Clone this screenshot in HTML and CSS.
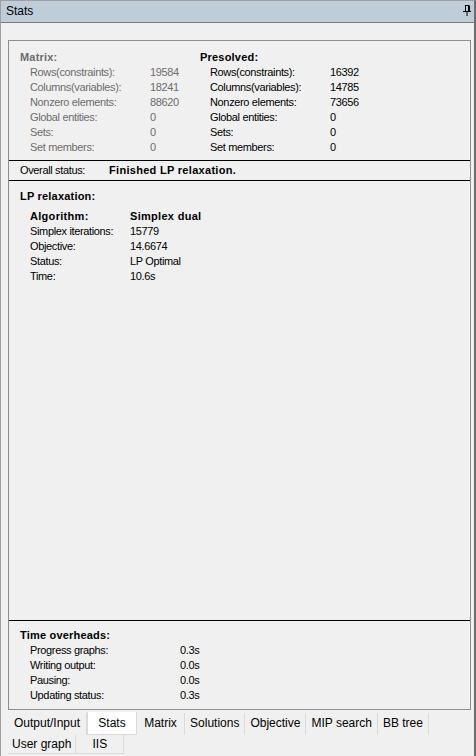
FILE: index.html
```html
<!DOCTYPE html>
<html>
<head>
<meta charset="utf-8">
<link rel="stylesheet" href="styles.css">
</head>
<body>
<div class="window">
  <div class="titlebar">
    <span class="title">Stats</span>
    <svg class="pin" width="8" height="11" viewBox="0 0 8 11">
      <path d="M2 0.5H6M2.5 0.5V6M5.5 0.5V6M6.5 0.5V6M0 6.5H8M4 6.5V11" stroke="#000" stroke-width="1" fill="none"/>
    </svg>
  </div>
  <div class="panel">
    <div class="group">
      <div class="matrix">
        <div class="col disabled">
          <div class="head">Matrix:</div>
          <div class="row"><span class="lbl">Rows(constraints):</span><span>19584</span></div>
          <div class="row"><span class="lbl">Columns(variables):</span><span>18241</span></div>
          <div class="row"><span class="lbl">Nonzero elements:</span><span>88620</span></div>
          <div class="row"><span class="lbl">Global entities:</span><span>0</span></div>
          <div class="row"><span class="lbl">Sets:</span><span>0</span></div>
          <div class="row"><span class="lbl">Set members:</span><span>0</span></div>
        </div>
        <div class="col">
          <div class="head">Presolved:</div>
          <div class="row"><span class="lbl">Rows(constraints):</span><span>16392</span></div>
          <div class="row"><span class="lbl">Columns(variables):</span><span>14785</span></div>
          <div class="row"><span class="lbl">Nonzero elements:</span><span>73656</span></div>
          <div class="row"><span class="lbl">Global entities:</span><span>0</span></div>
          <div class="row"><span class="lbl">Sets:</span><span>0</span></div>
          <div class="row"><span class="lbl">Set members:</span><span>0</span></div>
        </div>
      </div>
      <div class="status">
        <span class="status-lbl">Overall status:</span><span class="bold">Finished LP relaxation.</span>
      </div>
      <div class="lp">
        <div class="head">LP relaxation:</div>
        <div class="lp-rows">
          <div class="row bold"><span class="lbl-lp">Algorithm:</span><span>Simplex dual</span></div>
          <div class="row"><span class="lbl-lp">Simplex iterations:</span><span>15779</span></div>
          <div class="row"><span class="lbl-lp">Objective:</span><span>14.6674</span></div>
          <div class="row"><span class="lbl-lp">Status:</span><span>LP Optimal</span></div>
          <div class="row"><span class="lbl-lp">Time:</span><span>10.6s</span></div>
        </div>
      </div>
      <div class="overheads">
        <div class="head">Time overheads:</div>
        <div class="row"><span class="lbl-t">Progress graphs:</span><span>0.3s</span></div>
        <div class="row"><span class="lbl-t">Writing output:</span><span>0.0s</span></div>
        <div class="row"><span class="lbl-t">Pausing:</span><span>0.0s</span></div>
        <div class="row"><span class="lbl-t">Updating status:</span><span>0.3s</span></div>
      </div>
    </div>
  </div>
  <div class="tabs">
    <div class="tabrow">
      <div class="tab">Output/Input</div>
      <div class="tab selected">Stats</div>
      <div class="tab">Matrix</div>
      <div class="tab">Solutions</div>
      <div class="tab">Objective</div>
      <div class="tab">MIP search</div>
      <div class="tab">BB tree</div>
    </div>
    <div class="tabrow second">
      <div class="tab">User graph</div>
      <div class="tab">IIS</div>
    </div>
  </div>
</div>
</body>
</html>
```

FILE: styles.css
```css
html, body {
  margin: 0;
  padding: 0;
  background: #f0f0f0;
}
body {
  width: 476px;
  height: 756px;
  overflow: hidden;
  font-family: "Liberation Sans", Arial, sans-serif;
  font-size: 11px;
  color: #000;
}
.window {
  box-sizing: border-box;
  width: 476px;
  height: 756px;
  border-top: 1px solid #a0a0a0;
  border-left: 1px solid #a0a0a0;
  border-right: 2px solid #6d6d6d;
  display: flex;
  flex-direction: column;
}
.titlebar {
  height: 21px;
  background: #bfcddb;
  border-bottom: 1px solid #7a7a7a;
  display: flex;
  align-items: center;
  justify-content: space-between;
  padding: 0 3px 0 5px;
}
.title {
  font-size: 12px;
  line-height: 21px;
}
.pin {
  display: block;
  margin-top: -2px;
}
.panel {
  padding: 17px 3px 0 7px;
}
.group {
  box-sizing: border-box;
  height: 670px;
  border: 1px solid #8e8e8e;
  display: flex;
  flex-direction: column;
}
.row {
  display: flex;
  line-height: 15px;
  height: 15px;
  white-space: nowrap;
  letter-spacing: -0.35px;
}
.head {
  font-weight: bold;
  line-height: 15px;
  height: 15px;
  letter-spacing: 0.2px;
}
.bold {
  font-weight: bold;
  letter-spacing: 0.3px;
}
.matrix {
  display: flex;
  padding: 9px 0 5px 11px;
}
.col {
  width: 180px;
}
.col .row {
  padding-left: 10px;
}
.lbl {
  width: 120px;
}
.disabled {
  color: #6d6d6d;
}
.status {
  border-top: 1px solid #000;
  border-bottom: 1px solid #000;
  height: 19px;
  line-height: 19px;
  padding-left: 11px;
  display: flex;
  white-space: nowrap;
}
.status-lbl {
  width: 89px;
  letter-spacing: -0.35px;
}
.lp {
  flex: 1;
  padding: 8px 0 0 11px;
}
.lp-rows {
  margin-top: 5px;
  padding-left: 10px;
}
.lbl-lp {
  width: 100px;
}
.lp-rows .bold {
  letter-spacing: 0.3px;
}
.overheads {
  border-top: 1px solid #000;
  padding: 7px 0 6px 11px;
}
.overheads .row {
  padding-left: 10px;
}
.lbl-t {
  width: 150px;
}
.tabs {
  padding: 3px 0 0 7px;
  font-size: 12px;
}
.tabrow {
  display: flex;
  height: 22px;
}
.tabrow.second {
  height: 19px;
}
.tab {
  box-sizing: border-box;
  min-width: 48px;
  padding: 0 5px;
  text-align: center;
  line-height: 21px;
  border-right: 1px solid #dadada;
  white-space: nowrap;
}
.tab:first-child {
  padding: 0 6px;
}
.tabrow.second .tab {
  line-height: 19px;
  border-bottom: 1px solid #dadada;
}
.tabrow.second .tab:first-child {
  padding: 0 4px;
}
.tab.selected {
  background: #fff;
  border: 1px solid #dadada;
  border-top: none;
  min-width: 50px;
  margin-top: -1px;
  line-height: 23px;
  height: 23px;
}
```
